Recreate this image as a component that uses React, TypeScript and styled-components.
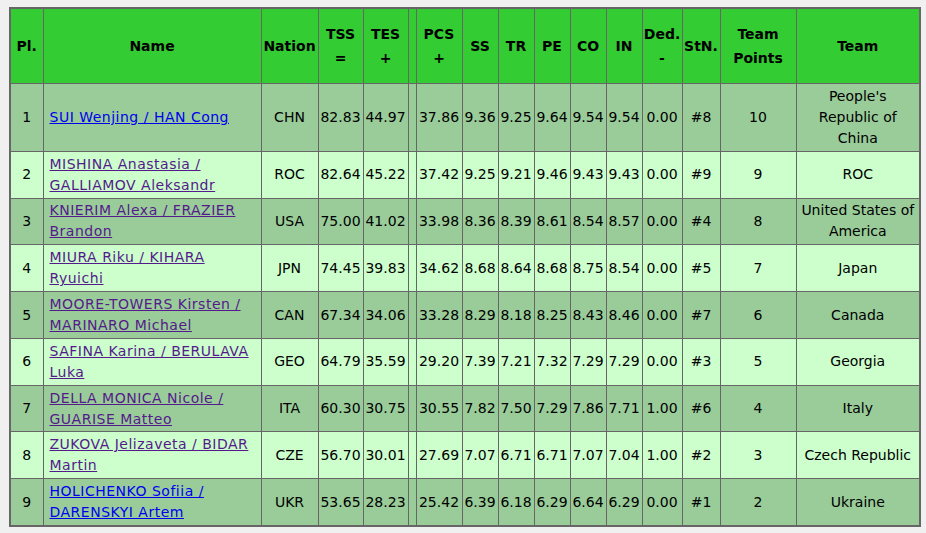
import styled, { createGlobalStyle } from 'styled-components'

interface Skater {
  place: number
  name: string
  nation: string
  tss: string
  tes: string
  pcs: string
  components: string[]
  ded: string
  start: string
  points: number
  team: string
  visited: boolean
}

const skaters: Skater[] = [
  { place: 1, name: 'SUI Wenjing / HAN Cong', nation: 'CHN', tss: '82.83', tes: '44.97', pcs: '37.86', components: ['9.36', '9.25', '9.64', '9.54', '9.54'], ded: '0.00', start: '#8', points: 10, team: "People's Republic of China", visited: false },
  { place: 2, name: 'MISHINA Anastasia / GALLIAMOV Aleksandr', nation: 'ROC', tss: '82.64', tes: '45.22', pcs: '37.42', components: ['9.25', '9.21', '9.46', '9.43', '9.43'], ded: '0.00', start: '#9', points: 9, team: 'ROC', visited: true },
  { place: 3, name: 'KNIERIM Alexa / FRAZIER Brandon', nation: 'USA', tss: '75.00', tes: '41.02', pcs: '33.98', components: ['8.36', '8.39', '8.61', '8.54', '8.57'], ded: '0.00', start: '#4', points: 8, team: 'United States of America', visited: true },
  { place: 4, name: 'MIURA Riku / KIHARA Ryuichi', nation: 'JPN', tss: '74.45', tes: '39.83', pcs: '34.62', components: ['8.68', '8.64', '8.68', '8.75', '8.54'], ded: '0.00', start: '#5', points: 7, team: 'Japan', visited: true },
  { place: 5, name: 'MOORE-TOWERS Kirsten / MARINARO Michael', nation: 'CAN', tss: '67.34', tes: '34.06', pcs: '33.28', components: ['8.29', '8.18', '8.25', '8.43', '8.46'], ded: '0.00', start: '#7', points: 6, team: 'Canada', visited: true },
  { place: 6, name: 'SAFINA Karina / BERULAVA Luka', nation: 'GEO', tss: '64.79', tes: '35.59', pcs: '29.20', components: ['7.39', '7.21', '7.32', '7.29', '7.29'], ded: '0.00', start: '#3', points: 5, team: 'Georgia', visited: true },
  { place: 7, name: 'DELLA MONICA Nicole / GUARISE Matteo', nation: 'ITA', tss: '60.30', tes: '30.75', pcs: '30.55', components: ['7.82', '7.50', '7.29', '7.86', '7.71'], ded: '1.00', start: '#6', points: 4, team: 'Italy', visited: true },
  { place: 8, name: 'ZUKOVA Jelizaveta / BIDAR Martin', nation: 'CZE', tss: '56.70', tes: '30.01', pcs: '27.69', components: ['7.07', '6.71', '6.71', '7.07', '7.04'], ded: '1.00', start: '#2', points: 3, team: 'Czech Republic', visited: true },
  { place: 9, name: 'HOLICHENKO Sofiia / DARENSKYI Artem', nation: 'UKR', tss: '53.65', tes: '28.23', pcs: '25.42', components: ['6.39', '6.18', '6.29', '6.64', '6.29'], ded: '0.00', start: '#1', points: 2, team: 'Ukraine', visited: false },
]

const columnWidths = [33, 218, 57, 45, 45, 8, 46, 36, 36, 36, 36, 36, 40, 38, 76, 124]

const headers: string[][] = [
  ['Pl.'], ['Name'], ['Nation'], ['TSS', '='], ['TES', '+'], [], ['PCS', '+'],
  ['SS'], ['TR'], ['PE'], ['CO'], ['IN'], ['Ded.', '-'], ['StN.'], ['Team', 'Points'], ['Team'],
]

export default function App() {
  return (
    <>
      <GlobalStyle />
      <Page>
        <ResultTable>
          <colgroup>
            {columnWidths.map((w, i) => (
              <Col key={i} $width={w} />
            ))}
          </colgroup>
          <thead>
            <tr>
              {headers.map((lines, i) => (
                <HeadCell key={i}>
                  {lines.map((l, j) => (
                    <span key={j}>
                      {j > 0 && <br />}
                      {l}
                    </span>
                  ))}
                </HeadCell>
              ))}
            </tr>
          </thead>
          <tbody>
            {skaters.map((s) => (
              <Row key={s.place} $odd={s.place % 2 === 1}>
                <Cell>{s.place}</Cell>
                <NameCell>
                  <SkaterLink href="#" $visited={s.visited}>
                    {s.name}
                  </SkaterLink>
                </NameCell>
                <Cell>{s.nation}</Cell>
                <Cell>{s.tss}</Cell>
                <Cell>{s.tes}</Cell>
                <Cell />
                <Cell>{s.pcs}</Cell>
                {s.components.map((c, i) => (
                  <Cell key={i}>{c}</Cell>
                ))}
                <Cell>{s.ded}</Cell>
                <Cell>{s.start}</Cell>
                <Cell>{s.points}</Cell>
                <Cell>{s.team}</Cell>
              </Row>
            ))}
          </tbody>
        </ResultTable>
      </Page>
    </>
  )
}

const GlobalStyle = createGlobalStyle`
  body {
    margin: 0;
    background: #f0f0f0;
    font-family: "DejaVu Sans", Verdana, sans-serif;
    font-size: 14px;
    color: #000;
  }
`

const Page = styled.div`
  padding: 7px 0 0 9px;
`

const ResultTable = styled.table`
  border-collapse: collapse;
  table-layout: fixed;
  width: 912px;
  border: 2px solid #666;
`

const Col = styled.col<{ $width: number }>`
  width: ${(p) => p.$width}px;
`

const HeadCell = styled.th`
  background: #33cc33;
  border: 1px solid #666;
  padding: 13px 0;
  line-height: 24px;
  font-weight: bold;
  text-align: center;
  vertical-align: middle;
  white-space: nowrap;
`

const Row = styled.tr<{ $odd: boolean }>`
  background: ${(p) => (p.$odd ? '#99cc99' : '#ccffcc')};
`

const Cell = styled.td`
  border: 1px solid #666;
  padding: 1.9px 1px;
  line-height: 21px;
  text-align: center;
  vertical-align: middle;
  white-space: nowrap;

  &:last-child {
    white-space: normal;
    padding: 1.9px 4px;
  }
`

const NameCell = styled.td`
  border: 1px solid #666;
  padding: 1.9px 6px;
  line-height: 21px;
  text-align: left;
  vertical-align: middle;
`

const SkaterLink = styled.a<{ $visited: boolean }>`
  color: ${(p) => (p.$visited ? '#551a8b' : '#0000ee')};
  text-decoration: underline;
  letter-spacing: 0.5px;
`
